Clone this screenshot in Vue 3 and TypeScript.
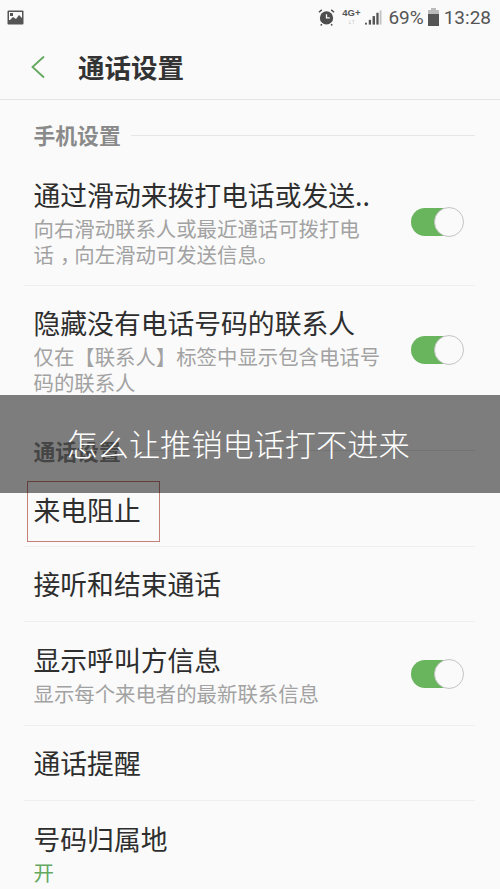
<script setup lang="ts">
interface Row {
  title: string
  sub?: string[]
  on?: boolean
  green?: boolean
  h: string
  boxed?: boolean
}
const phoneRows: Row[] = [
  { title: '通过滑动来拨打电话或发送..', sub: ['向右滑动联系人或最近通话可拨打电', '话，向左滑动可发送信息。'], on: true, h: 'h-a' },
  { title: '隐藏没有电话号码的联系人', sub: ['仅在【联系人】标签中显示包含电话号', '码的联系人'], on: true, h: 'h-b' },
]
const callRows: Row[] = [
  { title: '来电阻止', h: 'h-c', boxed: true },
  { title: '接听和结束通话', h: 'h-d' },
  { title: '显示呼叫方信息', sub: ['显示每个来电者的最新联系信息'], on: true, h: 'h-e' },
  { title: '通话提醒', h: 'h-d' },
  { title: '号码归属地', sub: ['开'], green: true, h: 'h-f' },
]
const parts = (s: string): string[] => s.split(/(，)/)
</script>

<template>
  <div class="page">
    <div class="status">
      <svg class="pic" width="17" height="15" viewBox="0 0 17 15">
        <rect x="0.5" y="0.5" width="16" height="14" rx="1" fill="#555" />
        <rect x="2" y="2" width="13" height="8" fill="#fafafa" />
        <rect x="3" y="3" width="3" height="3" fill="#555" />
        <path d="M2 11 L6 7 L9 9 L12 5 L15 8 V13 H2 Z" fill="#555" />
      </svg>
      <span class="spacer"></span>
      <svg width="17" height="18" viewBox="0 0 18 18" class="alarm">
        <circle cx="9" cy="10" r="7" fill="#4e4e4e" />
        <path d="M9 6 V10 H12.5" stroke="#fafafa" stroke-width="1.4" fill="none" />
        <path d="M1 4 L4 1.5 M17 4 L14 1.5 M4 16.5 L3 18 M14 16.5 L15 18" stroke="#4e4e4e" stroke-width="1.6" />
      </svg>
      <span class="net">
        <span class="net-top">4G+</span>
        <span class="net-arrows">↓↑</span>
      </span>
      <svg width="17" height="17" viewBox="0 0 18 17" class="signal">
        <rect x="0" y="14" width="2" height="2" fill="#555" />
        <rect x="4" y="11" width="2.4" height="5" fill="#555" />
        <rect x="8" y="7" width="2.6" height="9" fill="#555" />
        <rect x="12" y="3.5" width="2.4" height="12.5" fill="#555" />
        <rect x="15.5" y="1" width="2" height="15" fill="#c4c4c4" />
      </svg>
      <span class="pct">69%</span>
      <svg width="11" height="18" viewBox="0 0 11 18" class="batt">
        <rect x="3" y="0" width="5" height="2" fill="#bbb" />
        <rect x="0" y="2" width="11" height="5" fill="#bbb" />
        <rect x="0" y="6" width="11" height="12" fill="#555" />
      </svg>
      <span class="time">13:28</span>
    </div>

    <header class="bar">
      <svg class="back" width="16" height="24" viewBox="0 0 16 24">
        <path d="M14 1.5 L2.5 12 L14 22.5" fill="none" stroke="#63a85f" stroke-width="1.8" />
      </svg>
      <h1>通话设置</h1>
    </header>

    <div class="section first"><span>手机设置</span><i></i></div>
    <div v-for="(r, i) in phoneRows" :key="r.title" class="row" :class="[r.h, { last: i === phoneRows.length - 1 }]">
      <div class="texts">
        <div class="title">{{ r.title }}</div>
        <div v-for="s in r.sub" :key="s" class="sub">
          <span v-for="(p, j) in parts(s)" :key="j" :class="{ comma: p === '，' }">{{ p }}</span>
        </div>
      </div>
      <div v-if="r.on" class="switch"><b></b></div>
    </div>

    <div class="section second"><span>通话设置</span><i></i></div>
    <div v-for="(r, i) in callRows" :key="r.title" class="row" :class="[r.h, { last: i === callRows.length - 1 }]">
      <div class="texts">
        <div class="title">{{ r.title }}</div>
        <div v-for="s in r.sub" :key="s" class="sub" :class="{ green: r.green }">{{ s }}</div>
      </div>
      <div v-if="r.on" class="switch"><b></b></div>
      <div v-if="r.boxed" class="redbox"></div>
    </div>

    <div class="banner">怎么让推销电话打不进来</div>
  </div>
</template>

<style scoped>
.page {
  position: relative;
  width: 500px;
  height: 889px;
  overflow: hidden;
  background: #fafafa;
  color: #2e2e2e;
  font-family: "Noto Sans CJK SC", "Noto Sans", sans-serif;
}
.status {
  height: 34px;
  display: flex;
  align-items: center;
  padding: 0 9px 0 7px;
  color: #555;
}
.spacer { flex: 1; }
.alarm { margin-right: 7px; }
.net {
  display: flex;
  flex-direction: column;
  align-items: center;
  width: 18px;
  margin-right: 5px;
  font-family: "Liberation Sans", sans-serif;
  line-height: 9px;
}
.net-top { font-size: 9.5px; font-weight: 700; }
.net-arrows { font-size: 7px; color: #aaa; }
.signal { margin-right: 6px; }
.pct, .time {
  font-family: "Roboto", sans-serif;
  font-size: 19px;
  color: #555;
}
.batt { margin: 0 5px 0 4px; }
.bar {
  height: 65px;
  display: flex;
  align-items: center;
  border-bottom: 1px solid #e4e4e4;
  box-sizing: content-box;
}
.back { margin-left: 30px; }
.bar h1 {
  margin: 0 0 0 32px;
  font-size: 26.5px;
  font-weight: 700;
  line-height: 36px;
  color: #333;
}
.section {
  display: flex;
  align-items: center;
  padding: 0 25px 0 33.5px;
  color: #8a8a8a;
  font-size: 21.8px;
  font-weight: 700;
  line-height: 30px;
  box-sizing: border-box;
}
.section.first { height: 70px; }
.section.second { height: 59px; padding-top: 14px; }
.section i {
  flex: 1;
  height: 1px;
  margin-left: 10px;
  background: #e6e6e6;
}
.row {
  position: relative;
  display: flex;
  align-items: center;
  margin: 0 25px 0 24px;
  padding: 0 5px 0 9.5px;
  border-bottom: 1px solid #efefef;
  box-sizing: border-box;
}
.row.last { border-bottom: none; }
.h-a { height: 116px; padding-bottom: 12px; }
.h-b { height: 128px; }
.h-c { height: 74px; }
.h-d { height: 75px; }
.h-e { height: 104px; }
.h-f { height: 104px; }
.texts { flex: 1; }
.title {
  font-size: 26.8px;
  line-height: 36px;
  color: #2e2e2e;
  white-space: nowrap;
}
.sub {
  font-size: 20.4px;
  line-height: 26px;
  color: #a2a2a2;
  white-space: nowrap;
}
.title + .sub { margin-top: 2px; }
.sub.green { color: #63a85f; }
.comma {
  display: inline-block;
  transform: translateX(6px);
}
.switch {
  position: relative;
  flex: none;
  width: 52px;
  height: 28px;
  margin-right: 7px;
  border-radius: 14px;
  background: #69b55d;
}
.switch b {
  position: absolute;
  right: -1px;
  top: -1px;
  width: 30px;
  height: 30px;
  box-sizing: border-box;
  border-radius: 50%;
  background: #fafafa;
  border: 1px solid #c4c4c4;
}
.redbox {
  position: absolute;
  left: 3px;
  top: 8px;
  width: 133px;
  height: 61px;
  box-sizing: border-box;
  border: 1px solid #c47f76;
  pointer-events: none;
}
.banner {
  position: absolute;
  left: 0;
  right: 0;
  top: 395px;
  height: 98px;
  padding-left: 66.5px;
  box-sizing: border-box;
  background: rgba(0, 0, 0, 0.5);
  color: #fff;
  font-size: 31.2px;
  font-weight: 300;
  line-height: 96px;
  white-space: nowrap;
}
</style>
